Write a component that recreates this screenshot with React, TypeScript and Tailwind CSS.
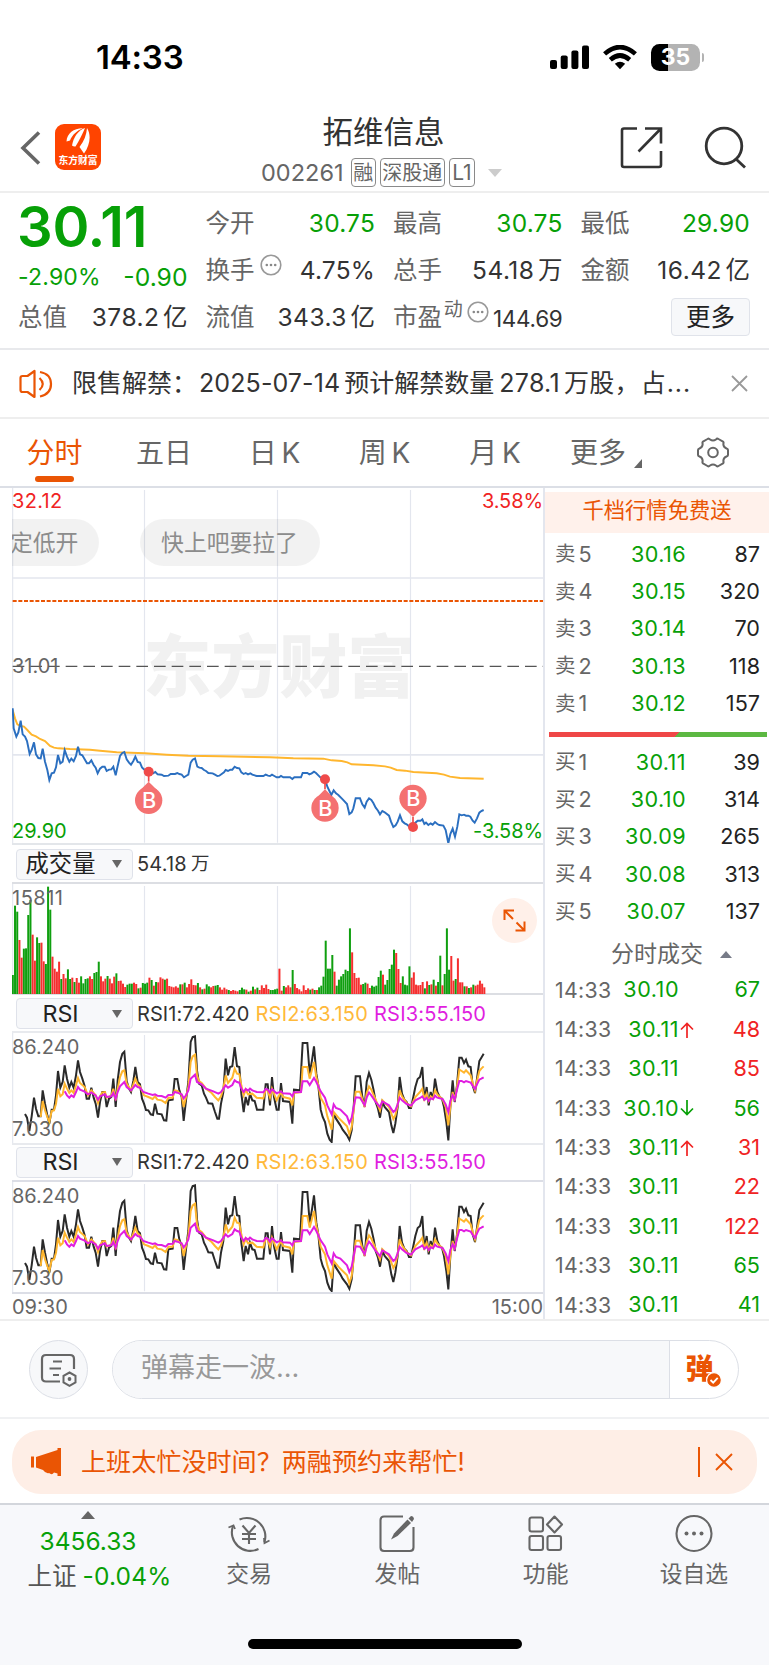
import type { ReactNode } from "react";

const PRICE_LINE =
  "38,685 41,745 49,770 55,757 62,722 68,763 75,770 81,783 89,822 95,810 102,787 108,823 115,834 122,835 128,806 135,845 142,870 148,900 155,880 162,878 168,862 174,825 181,850 188,845 194,810 201,830 208,845 214,836 221,844 228,828 234,800 240,823 247,826 254,838 261,850 267,850 274,841 281,855 287,863 293,880 300,866 307,860 314,860 320,873 327,869 334,868 340,860 347,886 353,858 360,828 367,819 373,816 380,838 387,848 393,854 400,843 406,830 413,846 420,848 426,862 433,869 446,875 459,880 466,876 473,883 485,884 492,888 505,887 512,882 525,882 532,879 538,882 545,884 552,892 558,888 565,884 572,848 578,839 585,835 592,860 598,863 605,864 612,870 618,873 625,879 638,880 645,884 652,888 658,887 665,882 672,877 677,870 684,873 691,869 697,869 704,860 711,864 718,865 724,877 731,882 737,879 744,883 751,880 757,884 770,888 790,888 797,884 804,887 810,888 816,884 823,888 830,892 837,892 843,888 850,892 870,892 877,897 883,892 903,892 908,879 922,879 928,883 935,880 942,875 948,879 955,886 962,893 975,897 982,920 994,945 1001,931 1008,940 1015,945 1028,958 1041,972 1048,1002 1055,997 1060,985 1067,955 1080,955 1087,973 1094,983 1100,965 1107,955 1114,960 1120,969 1127,983 1134,992 1140,1003 1147,993 1154,997 1167,1007 1173,1025 1180,1041 1187,1036 1193,1025 1200,1006 1207,1024 1214,1030 1220,1033 1227,1039 1239,1041 1246,1028 1253,1022 1262,1022 1267,1018 1273,1032 1278,1028 1285,1035 1292,1030 1298,1034 1305,1026 1312,1032 1318,1035 1330,1037 1337,1050 1345,1090 1351,1062 1358,1046 1365,1070 1372,1040 1378,1003 1385,1006 1392,1004 1398,1007 1405,1007 1411,1010 1418,1022 1424,1028 1431,1015 1438,998 1444,993 1451,990";

const AVG_LINE =
  "38,690 45,715 52,733 62,738 72,740 82,750 95,764 108,769 120,777 135,783 150,798 162,803 175,805 210,807 270,809 300,812 350,817 435,820 500,824 565,827 660,829 810,832 880,835 970,836 995,841 1025,843 1042,847 1055,853 1120,856 1155,859 1172,863 1190,870 1215,872 1240,876 1310,880 1332,884 1350,890 1380,894 1451,896";

const RSI1_LINE =
  "75,311 81,322 88,362 95,318 102,262 108,295 115,318 122,318 128,240 135,280 142,315 148,340 155,298 162,298 168,255 174,182 181,232 188,215 194,165 201,205 208,232 214,215 221,232 228,195 234,150 240,185 247,205 254,228 260,265 267,265 274,232 281,262 287,280 294,322 300,275 307,245 314,245 320,290 327,265 334,260 340,205 347,290 353,210 360,155 367,130 373,124 380,212 387,235 393,245 400,212 406,170 413,215 420,222 426,265 432,280 438,299 445,300 452,312 459,314 465,280 472,310 485,312 492,330 499,331 505,270 518,268 524,206 532,206 538,240 545,260 551,332 558,270 565,215 572,95 578,80 585,78 591,180 597,220 605,225 612,250 618,262 625,279 637,280 645,305 652,325 657,325 663,280 670,245 677,145 684,195 690,170 697,168 704,110 711,168 718,170 724,250 731,305 737,260 744,285 750,250 757,270 764,272 771,298 790,298 797,222 803,222 810,285 816,200 822,260 830,298 836,298 843,218 849,272 870,275 877,340 882,238 900,240 908,98 922,98 929,190 936,150 942,108 949,190 955,225 962,298 968,320 975,335 982,370 989,388 995,395 1001,308 1008,325 1021,345 1028,358 1041,375 1048,388 1055,360 1061,290 1067,198 1080,198 1087,260 1094,290 1100,215 1107,188 1114,208 1121,240 1127,275 1134,295 1140,322 1147,275 1154,290 1167,305 1174,345 1180,368 1186,340 1193,290 1199,200 1206,250 1213,268 1220,275 1227,293 1233,293 1240,260 1246,230 1253,206 1260,200 1267,170 1273,270 1280,230 1286,285 1292,245 1299,265 1305,205 1312,245 1319,260 1326,265 1332,290 1339,335 1345,390 1351,290 1358,210 1364,275 1371,225 1378,142 1385,142 1392,158 1398,148 1405,168 1412,170 1418,225 1425,248 1431,205 1438,152 1444,142 1451,130";

const RSI2_LINE =
  "122,320 128,272 135,300 142,320 148,335 155,302 162,300 168,280 174,235 181,258 188,252 194,220 201,235 208,248 214,240 221,248 228,225 234,203 240,218 254,230 264,255 274,240 287,255 294,278 300,258 307,246 315,245 320,262 334,256 340,235 347,270 353,235 360,200 367,183 373,180 380,220 393,240 400,222 406,205 413,222 420,228 432,255 445,260 458,266 465,258 472,268 485,270 497,278 505,262 518,262 524,240 532,242 545,255 551,290 558,260 565,230 572,155 578,138 585,133 591,195 597,212 605,218 618,235 635,248 645,260 655,270 663,258 670,235 677,195 684,218 697,202 704,175 711,190 718,192 724,225 731,255 737,238 744,252 757,250 770,262 790,264 797,238 803,240 810,262 816,235 830,270 843,245 849,260 870,265 877,285 882,248 903,245 908,170 922,170 929,205 942,155 949,200 955,225 962,262 975,285 982,318 995,358 1001,305 1015,322 1041,348 1048,372 1055,350 1061,300 1067,244 1080,244 1094,290 1100,248 1107,228 1114,238 1127,268 1140,300 1147,270 1167,290 1180,326 1186,315 1193,285 1199,240 1206,258 1220,278 1233,288 1246,260 1260,245 1267,235 1273,266 1280,250 1286,272 1292,258 1299,265 1305,240 1312,252 1328,268 1337,290 1345,345 1351,290 1358,245 1364,270 1371,230 1378,178 1385,182 1392,187 1398,180 1412,195 1418,218 1425,240 1431,212 1438,182 1444,175 1451,168";

const RSI3_LINE =
  "194,243 201,255 208,262 214,255 221,260 228,245 234,230 240,238 254,244 264,252 274,246 287,255 294,268 300,258 315,252 320,260 334,258 340,248 347,265 353,245 360,228 373,215 380,230 393,240 400,232 406,224 413,230 420,232 430,245 445,250 458,254 465,252 472,256 485,257 497,262 505,254 518,253 524,245 532,247 545,252 551,264 558,255 565,240 572,205 585,193 591,215 605,222 618,235 640,243 655,250 663,245 670,235 677,225 684,232 697,224 704,210 711,215 718,217 724,235 731,245 737,236 744,241 750,235 757,240 770,245 790,246 797,236 803,238 810,247 816,237 830,249 843,243 849,249 870,250 877,258 882,246 903,245 908,213 922,213 929,224 942,203 949,215 962,243 975,262 982,285 995,312 1001,282 1008,293 1021,298 1041,318 1048,338 1055,322 1061,290 1067,261 1080,262 1094,285 1100,262 1107,247 1114,255 1127,275 1140,290 1147,273 1167,285 1180,305 1186,300 1193,282 1199,262 1206,270 1220,281 1233,286 1246,270 1260,263 1267,258 1273,268 1280,262 1286,272 1292,264 1299,267 1305,256 1312,262 1328,266 1337,282 1345,305 1351,272 1358,255 1364,268 1371,238 1378,212 1385,212 1392,216 1398,212 1412,217 1418,226 1425,236 1431,222 1438,208 1444,205 1451,201";

// 每分钟成交量: G 跌 / R 涨
const VOLUME = (
  "G57 G265 G247 R162 R109 G136 G137 G237 G282 R178 R100 G170 G153 R154 R98 G90 G322 G253 R112 R76 R67 R97 G45 R60 R47 G74 G45 R49 G36 R48 R34 G53 G32 G45 G47 R53 R45 G63 G66 G97 R53 R38 R46 G54 R46 R32 R52 G62 R39 R40 R31 R21 G28 G31 G31 R34 R30 G17 R19 G33 G31 G34 R49 G42 R25 G36 R35 R50 R46 G43 R46 R24 R22 R20 R23 R19 G29 R29 G34 R20 R30 R44 R27 R26 G33 R20 G14 R16 G29 G23 R20 R24 G25 G27 R20 R13 R19 R14 G12 R9 R12 R10 R8 G12 G19 G14 R13 G7 R10 G22 R14 G19 R12 R26 R18 R28 R15 G12 G12 G14 G16 " +
  "R76 R10 G24 R20 R26 R20 G72 R30 R18 R14 R8 R26 R12 R17 G13 R16 G12 R12 G20 G25 G52 G160 G76 G76 G117 R67 G25 G43 G53 G60 G73 G69 G197 R125 R63 R48 R49 R28 G30 G34 R31 R18 G25 G22 G25 G51 G70 R58 G28 G42 G75 G88 G133 R123 R75 R33 G53 G28 G26 G83 R49 R65 R28 R26 R27 R36 G17 R38 G27 R29 G43 R25 G36 G115 R26 G60 G197 G73 R114 R40 G45 R107 R35 R35 G23 R23 G18 R20 G28 R25 R28 R40 R31 R20"
).split(" ").map((s) => ({ up: s[0] === "R", v: Number(s.slice(1)) }));

const SELLS = [["卖", "5", "30.16", "87"], ["卖", "4", "30.15", "320"], ["卖", "3", "30.14", "70"], ["卖", "2", "30.13", "118"], ["卖", "1", "30.12", "157"]];
const BUYS = [["买", "1", "30.11", "39"], ["买", "2", "30.10", "314"], ["买", "3", "30.09", "265"], ["买", "4", "30.08", "313"], ["买", "5", "30.07", "137"]];

const TRADES = [
  { price: "30.10", dir: "", qty: "67", up: false },
  { price: "30.11", dir: "up", qty: "48", up: true },
  { price: "30.11", dir: "", qty: "85", up: true },
  { price: "30.10", dir: "down", qty: "56", up: false },
  { price: "30.11", dir: "up", qty: "31", up: true },
  { price: "30.11", dir: "", qty: "22", up: true },
  { price: "30.11", dir: "", qty: "122", up: true },
  { price: "30.11", dir: "", qty: "65", up: false },
  { price: "30.11", dir: "", qty: "41", up: false },
];

function StatusBar() {
  return (
    <div className="flex h-[110px] items-start justify-between pt-[37px] pr-[65px] pl-[96px]">
      <span className="text-[33px] leading-[41px] font-semibold tracking-[-0.200px] text-black">14:33</span>
      <div className="flex items-center pt-[7px]">
        <svg width="39" height="25" viewBox="0 0 39 25">
          <rect x="0" y="15" width="7" height="9" rx="2" />
          <rect x="10.700" y="10.500" width="7" height="13.500" rx="2" />
          <rect x="21.400" y="5.500" width="7" height="18.500" rx="2" />
          <rect x="32" y="0.500" width="7" height="23.500" rx="2" />
        </svg>
        <svg className="ml-[14px]" width="34" height="25" viewBox="0 0 34 25">
          <path d="M17 24.300 L11.800 18.800 Q17 14.800 22.200 18.800 Z" />
          <path d="M7.300 14.700 Q17 6.300 26.700 14.700" fill="none" stroke="#000" strokeWidth="4.600" />
          <path d="M1.600 8.900 Q17 -4.700 32.400 8.900" fill="none" stroke="#000" strokeWidth="4.600" />
        </svg>
        <div className="ml-[14px] flex h-[27px] w-[49px] items-center justify-center overflow-hidden rounded-[8.500px] bg-[linear-gradient(90deg,#000_35%,#b3b3b3_35%)]">
          <span className="text-[23px] leading-none font-bold text-white">35</span>
        </div>
        <div className="ml-[1.500px] h-[9px] w-[2.500px] rounded-r-full bg-[#b3b3b3]" />
      </div>
    </div>
  );
}

function Tag({ children }: { children: ReactNode }) {
  return <span className="flex h-[29px] items-center rounded-[4px] border-[1.500px] border-[#8a8a8a] px-[1.500px] text-[20px] leading-none text-[#666]">{children}</span>;
}

function NavBar() {
  return (
    <div className="grid h-[83px] grid-cols-[200px_1fr_200px] border-b-2 border-[#eee]">
      <div className="flex items-start pt-[14px] pl-[20px]">
        <svg className="mt-[7px]" width="21" height="34" viewBox="0 0 21 34" fill="none" stroke="#666" strokeWidth="3.600">
          <path d="M19 1.500 L3 17 L19 32.500" />
        </svg>
        <div className="ml-[14px] flex h-[46px] w-[46px] flex-col items-center rounded-[9px] bg-[#ff4400]">
          <svg className="mt-[3px]" width="26" height="27" viewBox="0 0 26 27" fill="#fff">
            <path d="M1.500 14.500 C2 6 9 1 18 1.200 C12 3.500 7 8 5 13.500 Z" />
            <path d="M7 18.500 C8.500 10 13 3.500 20 1 C17.500 7 14.500 13 10.500 19.500 C9.500 19.800 8 19.500 7 18.500 Z" />
            <path d="M22 1 C26.500 8 25 18 19 26.500 L14.500 20 C19 14 21.500 8 22 1 Z" />
          </svg>
          <span className="mt-[1px] text-[9.800px] leading-[11px] font-bold text-white">东方财富</span>
        </div>
      </div>
      <div className="flex flex-col items-center pr-[2px]">
        <h1 className="mt-[1px] text-[30.500px] leading-[42px] text-[#333]">拓维信息</h1>
        <div className="mt-[5px] flex h-[29px] items-center pr-[2px]">
          <span className="mr-[7px] -ml-[2px] text-[23.500px] leading-none tracking-[0.050px] text-[#666]">002261</span>
          <div className="flex gap-[4px]">
            <Tag>融</Tag>
            <Tag>深股通</Tag>
            <Tag><span className="px-[1px] text-[21px]">L1</span></Tag>
          </div>
          <svg className="ml-[13px]" width="14" height="8" viewBox="0 0 14 8" fill="#ccc">
            <path d="M0 0 H14 L7 8 Z" />
          </svg>
        </div>
      </div>
      <div className="flex items-start justify-end gap-[41px] pt-[16px] pr-[22px]">
        <svg width="43" height="43" viewBox="0 0 43 43" fill="none" stroke="#333" strokeWidth="2.600">
          <path d="M17 2.500 H4 Q2 2.500 2 4.500 V39 Q2 41 4 41 H39 Q41 41 41 39 V25" />
          <path d="M25 2.500 H41 V17.500 M41 2.500 L18.500 25.500" />
        </svg>
        <svg width="43" height="43" viewBox="0 0 43 43" fill="none" stroke="#333" strokeWidth="2.800">
          <circle cx="20" cy="20" r="17.800" />
          <path d="M32 33 L41 41.500" />
        </svg>
      </div>
    </div>
  );
}

function InfoDot() {
  return (
    <svg className="relative -top-[5px] shrink-0" width="22" height="22" viewBox="0 0 22 22">
      <circle cx="11" cy="11" r="9.800" fill="none" stroke="#999" strokeWidth="1.600" />
      <circle cx="6.800" cy="11" r="1.300" fill="#888" />
      <circle cx="11" cy="11" r="1.300" fill="#888" />
      <circle cx="15.200" cy="11" r="1.300" fill="#888" />
    </svg>
  );
}

function Stat({ label, value, unit, green, info }: { label: string; value: string; unit?: string; green?: boolean; info?: boolean }) {
  return (
    <div className="-ml-px flex items-center justify-between whitespace-nowrap">
      <div className="flex items-center gap-[5px]">
        <span className="text-[24.500px] leading-none text-[#666]">{label}</span>
        {info && <InfoDot />}
      </div>
      <span className={`flex items-center gap-[3.500px] text-[24.500px] leading-none ${unit ? "tracking-[0.500px]" : "tracking-[0.200px]"} ${green ? "text-[#07a007]" : "text-[#333]"}`}>
        {value}
        {unit && <span className="tracking-normal">{unit}</span>}
      </span>
    </div>
  );
}

function Quote() {
  return (
    <div className="grid h-[157px] grid-cols-4 grid-rows-[46.500px_47px_47px] gap-x-[19px] border-b-2 border-[#e8e9ec] px-[19px] pt-[7px]">
      <div className="row-span-2 flex flex-col">
        <span className="mt-[5px] -ml-[2px] text-[56px] leading-[45px] font-semibold tracking-[-0.200px] text-[#07a007]">30.11</span>
        <div className="mt-[12px] -ml-px flex items-center justify-between leading-[30px] text-[#07a007]">
          <span className="text-[23px] tracking-[0.200px]">-2.90%</span>
          <span className="text-[24.700px]">-0.90</span>
        </div>
      </div>
      <Stat label="今开" value="30.75" green />
      <Stat label="最高" value="30.75" green />
      <Stat label="最低" value="29.90" green />
      <Stat label="换手" value="4.75%" info />
      <Stat label="总手" value="54.18" unit="万" />
      <Stat label="金额" value="16.42" unit="亿" />
      <Stat label="总值" value="378.2" unit="亿" />
      <Stat label="流值" value="343.3" unit="亿" />
      <div className="-ml-px flex items-center justify-between leading-none whitespace-nowrap">
        <span className="text-[24.500px] text-[#666]">市盈</span>
        <span className="relative -top-[8px] text-[19px] text-[#666]">动</span>
        <span className="ml-[3px]"><InfoDot /></span>
        <span className="mt-[5px] ml-[2px] text-[22.500px] tracking-[-0.300px] text-[#333]">144.69</span>
      </div>
      <div className="flex items-center justify-end">
        <button className="h-[38px] w-[79px] rounded-[4px] border-[1.500px] border-[#e0e3ea] bg-[#f7f8fa] text-[24.500px] leading-none text-[#222]">更多</button>
      </div>
    </div>
  );
}

function Notice() {
  return (
    <div className="flex h-[69px] items-center border-b-2 border-[#eee] pr-[21px] pl-[19px]">
      <svg width="34" height="30" viewBox="0 0 34 30" fill="none" stroke="#ea5504" strokeWidth="2.200" strokeLinejoin="round">
        <path d="M15.500 2 V28 L8.500 23 H3.500 Q1.500 23 1.500 21 V9 Q1.500 7 3.500 7 H8.500 Z" />
        <path d="M20.500 9 Q27 15 20.500 21" />
        <path d="M21 3 Q32 5 32 15 Q32 25 21 27.500" />
      </svg>
      <p className="ml-[19px] flex flex-1 items-center text-[25px] leading-none whitespace-nowrap text-[#333]">
        <span>限售解禁：</span>
        <span className="ml-[2px] tracking-[0.100px]">2025-07-14</span>
        <span className="ml-[4px]">预计解禁数量</span>
        <span className="ml-[5px] tracking-[0.300px]">278.1</span>
        <span className="ml-[4px] tracking-[0.300px]">万股，</span>
        <span className="ml-[1px] tracking-[0.900px]">占...</span>
      </p>
      <svg width="17" height="17" viewBox="0 0 17 17" fill="none" stroke="#999" strokeWidth="1.800">
        <path d="M1 1 L16 16 M16 1 L1 16" />
      </svg>
    </div>
  );
}

function Tabs() {
  return (
    <div className="grid h-[69px] grid-cols-[109px_111px_110px_110px_111px_109px_109px] border-b-2 border-[#dcdfe6] text-[28px] text-[#666]">
      <div className="flex flex-col items-center text-[#ea5504]">
        <span className="mt-[13px] leading-[42px]">分时</span>
        <span className="mt-[2px] h-[6px] w-[39px] rounded-full bg-[#ea5504]" />
      </div>
      {["五日", "日 K", "周 K", "月 K"].map((t) => (
        <div key={t} className="mt-[13px] pr-px text-center leading-[42px] [word-spacing:-3px]">{t}</div>
      ))}
      <div className="flex items-start pt-[13px] pl-[19px]">
        <span className="leading-[42px]">更多</span>
        <svg className="mt-[27px] ml-[8px]" width="8" height="9" viewBox="0 0 8 9" fill="#666">
          <path d="M8 0 V9 H0 Z" />
        </svg>
      </div>
      <div className="flex justify-center pt-[18px] pr-[4px]">
        <svg width="32" height="31" viewBox="0 0 32 31" fill="none" stroke="#666" strokeWidth="2" strokeLinejoin="round">
          <path d="M10.500 2 Q12 1 13 2.500 Q16 4.500 19 2.500 Q20 1 21.500 2 L26 4.600 Q27 5.500 26.300 7 Q26.500 10.500 29.500 11.500 Q31 12 31 13 V18 Q31 19 29.500 19.500 Q26.500 20.500 26.300 24 Q27 25.500 26 26.400 L21.500 29 Q20 30 19 28.500 Q16 26.500 13 28.500 Q12 30 10.500 29 L6 26.400 Q5 25.500 5.700 24 Q5.500 20.500 2.500 19.500 Q1 19 1 18 V13 Q1 12 2.500 11.500 Q5.500 10.500 5.700 7 Q5 5.500 6 4.600 Z" />
          <circle cx="16" cy="15.500" r="4.800" />
        </svg>
      </div>
    </div>
  );
}

function GridLines({ top, bottom }: { top: number; bottom: number }) {
  return (
    <g stroke="#e3e6ee" strokeWidth="3.500">
      <path d={`M433.500 ${top} V${bottom} M832.500 ${top} V${bottom} M1231.500 ${top} V${bottom}`} />
      <path d={`M38 ${top - 10} V${bottom + 10}`} />
    </g>
  );
}

function Marker({ x, y, flip }: { x: number; y: number; flip?: boolean }) {
  const cy = flip ? y - 86 : y + 86;
  const tip = flip ? y - 30 : y + 30;
  const edge = flip ? cy + 30 : cy - 30;
  return (
    <g>
      <path d={`M${x} ${y} V${tip}`} stroke="#ef4a4a" strokeWidth="5" />
      <circle cx={x} cy={y} r="15" fill="#ef4a4a" />
      <circle cx={x} cy={cy} r="41" fill="#f47171" />
      <path d={`M${x} ${tip} L${x + 26} ${edge} H${x - 26} Z`} fill="#f47171" />
      <text x={x + 1} y={cy + 23} textAnchor="middle" fontSize="65" fontWeight="500" fill="#fff">B</text>
    </g>
  );
}

function PriceChart() {
  return (
    <div className="relative h-[357px] overflow-hidden border-b-2 border-[#e3e6ea] text-[20px] leading-none">
      <svg className="block" width="532" height="356" viewBox="36 24 1596 1068">
        <text x="430" y="635" fontSize="204" fontWeight="900" fill="#f1f1f1">东方财富</text>
        <GridLines top={30} bottom={1088} />
        <path d="M36 294 H1632 M36 824.500 H1632" stroke="#e3e6ee" strokeWidth="5" />
        <path d="M38 363 H1632" stroke="#ea5504" strokeWidth="6" strokeDasharray="12 5" />
        <path d="M38 559 H1632" stroke="#555" strokeWidth="4" strokeDasharray="35 18" />
        <polyline points={AVG_LINE} fill="none" stroke="#ffb62e" strokeWidth="5.800" />
        <polyline points={PRICE_LINE} fill="none" stroke="#2b6fc0" strokeWidth="5.800" />
        <Marker x={446} y={875} />
        <Marker x={975} y={898} />
        <Marker x={1239} y={1041} flip />
      </svg>
      <span className="absolute top-[3px] left-0 tracking-[0.300px] text-[#f02323]">32.12</span>
      <span className="absolute top-[3px] right-0 tracking-[-0.100px] text-[#f02323]">3.58%</span>
      <span className="absolute top-[168px] left-0 text-[#666]">31.01</span>
      <span className="absolute top-[333px] left-0 text-[#07a007]">29.90</span>
      <span className="absolute top-[333px] right-0 tracking-[-0.100px] text-[#07a007]">-3.58%</span>
      {/* 弹幕 */}
      <span className="absolute top-[31px] -left-[30px] flex h-[47px] w-[117px] items-center rounded-full bg-black/5 pt-[2px] pl-[28px] text-[22.800px] whitespace-nowrap text-[#8c8c8c]">定低开</span>
      <span className="absolute top-[31px] left-[128px] flex h-[47px] w-[180px] items-center justify-center rounded-full bg-black/5 pt-[2px] pr-[1px] text-[22.800px] text-[#8c8c8c]">快上吧要拉了</span>
    </div>
  );
}

function IndicatorSelect({ label }: { label: string }) {
  return (
    <div className="ml-[4px] flex h-[31px] w-[117px] shrink-0 items-center rounded-[4px] border-[1.500px] border-[#dfe2ea] bg-[#f7f8fa] text-[#222]">
      <span className="flex-1 text-center text-[23.300px] leading-none">{label}</span>
      <svg className="mr-[10px] ml-[8px]" width="10" height="8" viewBox="0 0 10 8" fill="#666">
        <path d="M0 0 H10 L5 8 Z" />
      </svg>
    </div>
  );
}

function VolumeChart() {
  return (
    <div className="relative h-[111px] border-b-2 border-[#dcdee3]">
      <svg className="block" width="532" height="110" viewBox="36 132 1596 330">
        <GridLines top={138} bottom={455} />
        {VOLUME.map((b, i) => (
          <rect key={i} x={35.5 + i * 6.61} y={462 - b.v} width="6" height={b.v} fill={b.up ? "#f52f2f" : "#0f9f0f"} />
        ))}
      </svg>
      <span className="absolute top-[4px] left-0 text-[20px] leading-none tracking-[0.500px] text-[#666]">15811</span>
      <div className="absolute top-[14px] right-[6px] flex h-[45px] w-[45px] items-center justify-center rounded-full bg-[#fff0e9]">
        <svg width="23" height="23" viewBox="0 0 23 23" fill="none" stroke="#ea5504" strokeWidth="2">
          <path d="M11 1.500 H1.500 V11 M1.500 1.500 L10 10" />
          <path d="M12.500 21.500 H21.500 V12.500 M21.500 21.500 L13.500 13.500" />
        </svg>
      </div>
    </div>
  );
}

function RsiHeader() {
  return (
    <>
      <IndicatorSelect label="RSI" />
      <div className="ml-[4px] flex gap-[6px] text-[20px] leading-none tracking-[0.200px] whitespace-nowrap">
        <span className="tracking-[0.050px] text-[#333]">RSI1:72.420</span>
        <span className="text-[#ffb93a]">RSI2:63.150</span>
        <span className="text-[#e01ee0]">RSI3:55.150</span>
      </div>
    </>
  );
}

function RsiChart() {
  return (
    <div className="relative text-[20px] leading-none text-[#666]">
      <svg className="block" width="532" height="110" viewBox="36 68 1596 330">
        <GridLines top={74} bottom={396} />
        <g fill="none" strokeWidth="6">
          <polyline points={RSI1_LINE} stroke="#2a2a2a" />
          <polyline points={RSI2_LINE} stroke="#ffb62e" />
          <polyline points={RSI3_LINE} stroke="#e01ee0" />
        </g>
      </svg>
      <span className="absolute top-[4px] left-0">86.240</span>
      <span className="absolute top-[86px] left-0">7.030</span>
    </div>
  );
}

function Charts() {
  return (
    <div className="w-[545px] shrink-0 border-r-2 border-[#e3e6ee] pl-[12px]">
      <PriceChart />
      <div className="flex h-[39px] items-center border-b-2 border-[#dcdee3] pt-px">
        <IndicatorSelect label="成交量" />
        <span className="ml-[4px] flex gap-[4px] text-[20px] leading-none tracking-[0.200px] text-[#333]">54.18<span className="text-[18.500px]">万</span></span>
      </div>
      <VolumeChart />
      <div className="flex h-[38px] items-center border-b-2 border-[#e8eaee] pt-px"><RsiHeader /></div>
      <RsiChart />
      <div className="flex h-[39px] items-center border-y-2 border-t-[#e8eaee] border-b-[#dcdee6] pb-px"><RsiHeader /></div>
      <RsiChart />
      <div className="flex h-[28px] items-center justify-between border-t-2 border-[#dcdee6] text-[20px] leading-none text-[#666]">
        <span>09:30</span>
        <span>15:00</span>
      </div>
    </div>
  );
}

function DepthRow({ row }: { row: string[] }) {
  return (
    <div className="grid h-[37.300px] grid-cols-[40px_90px_1fr] items-center text-[21.600px] leading-none">
      <span className="flex items-center gap-[3px] text-[#666]"><span className="-ml-px text-[20.500px]">{row[0]}</span>{row[1]}</span>
      <span className="text-right tracking-[0.400px] text-[#07a007]">{row[2]}</span>
      <span className="text-right text-[#222]">{row[3]}</span>
    </div>
  );
}

function OrderBook() {
  return (
    <div className="flex-1 pt-[4px]">
      <div className="flex h-[41px] items-center justify-center bg-[#fff1eb] pb-[3px] text-[21.300px] leading-none text-[#ea5504]">千档行情免费送</div>
      <div className="pt-[3px] pr-[9px] pl-[11px]">
        {SELLS.map((r) => <DepthRow key={r[1]} row={r} />)}
      </div>
      <div className="mt-[9.500px] mr-[2px] ml-[4px] h-[5px] bg-[linear-gradient(135deg,#ef4747_58.500%,#5cb842_58.500%)]" />
      <div className="mt-[7px] pr-[9px] pl-[11px]">
        {BUYS.map((r) => <DepthRow key={r[1]} row={r} />)}
      </div>
      <div className="flex h-[40px] items-center justify-center pt-[8px] pl-[29px] text-[23px] leading-none text-[#666]">
        分时成交
        <svg className="ml-[17px]" width="12" height="7" viewBox="0 0 12 7" fill="#777b88">
          <path d="M0 7 H12 L6 0 Z" />
        </svg>
      </div>
      <div className="pr-[9px] pl-[11px]">
        {TRADES.map((t, i) => (
          <div key={i} className="grid h-[39.400px] grid-cols-[60px_63px_18px_1fr] items-center text-[21.600px] leading-none">
            <span className="-ml-px text-[21.300px] tracking-[0.300px] text-[#666]">14:33</span>
            <span className="text-right tracking-[0.500px] text-[#07a007]">{t.price}</span>
            <span className="pl-[1px]">
              {t.dir && (
                <svg className={t.dir === "down" ? "rotate-180" : ""} width="14" height="16" viewBox="0 0 14 16" fill="none" stroke={t.dir === "up" ? "#f02323" : "#07a007"} strokeWidth="1.700">
                  <path d="M7 16 V1.500 M1 7.500 L7 1.500 L13 7.500" />
                </svg>
              )}
            </span>
            <span className={`text-right ${t.up ? "text-[#f02323]" : "text-[#07a007]"}`}>{t.qty}</span>
          </div>
        ))}
      </div>
    </div>
  );
}

function DanmakuBar() {
  return (
    <div className="flex h-[98px] items-center border-b-2 border-[#f0f1f3] pt-[1px] pl-[29px]">
      <div className="flex h-[59px] w-[59px] items-center justify-center rounded-full border-[1.500px] border-[#dcdfe6] bg-[#f7f8fa]">
        <svg width="37" height="34" viewBox="0 0 37 34" fill="none" stroke="#666" strokeWidth="2.200">
          <path d="M20 28.500 H6 Q2 28.500 2 24.500 V6 Q2 2 6 2 H30 Q34 2 34 6 V16" />
          <path d="M13 8.500 H22 M9.500 15.500 H21 M13 22 H19" />
          <path d="M29.500 19.500 L35.500 22.800 V29.500 L29.500 32.800 L23.500 29.500 V22.800 Z" strokeWidth="2" />
          <circle cx="29.500" cy="26" r="1.900" fill="#666" stroke="none" />
        </svg>
      </div>
      <div className="ml-[24px] flex h-[59px] w-[627px] overflow-hidden rounded-full border-[1.500px] border-[#dcdfe6] bg-white">
        <div className="flex w-[556.500px] items-center border-r-[1.500px] border-[#dcdfe6] bg-[#f7f8fa] pb-[4px] pl-[28px] text-[27px] leading-none text-[#999]">弹幕走一波...</div>
        <div className="relative flex-1">
          <span className="absolute top-[14px] left-[16px] text-[28px] leading-none font-black text-[#ea5504]">弹</span>
          <svg className="absolute top-[31px] left-[36px]" width="16" height="16" viewBox="0 0 16 16">
            <circle cx="8" cy="8" r="7.400" fill="#ea5504" stroke="#fff" strokeWidth="1.200" />
            <path d="M4.500 8 L7.200 10.700 L11.700 5.800" fill="none" stroke="#fff" strokeWidth="1.800" />
          </svg>
        </div>
      </div>
    </div>
  );
}

function PromoBar() {
  return (
    <div className="h-[84px] px-[12px] pt-[11px]">
      <div className="flex h-[64px] items-center rounded-[29px] bg-[#feeee6] pr-[24px] pl-[19px] text-[#ea5504]">
        <svg width="31" height="28" viewBox="0 0 31 28" fill="#ea5504">
          <path d="M0 8.500 H3 V19.500 H0 Z" />
          <path d="M5 9 L26.500 2 V0 H30 V28 H26.500 V25.500 L23 24.500 Q21 27.500 18 25 Q15 26 12 22 L5 19.500 Z" />
        </svg>
        <span className="ml-[19px] flex-1 pt-px text-[25.100px] leading-none whitespace-nowrap">上班太忙没时间？两融预约来帮忙!</span>
        <span className="h-[30px] w-[2px] bg-[#ea5504]" />
        <svg className="ml-[15px]" width="18" height="18" viewBox="0 0 18 18" fill="none" stroke="#ea5504" strokeWidth="1.900">
          <path d="M1 1 L17 17 M17 1 L1 17" />
        </svg>
      </div>
    </div>
  );
}

function TabItem({ label, children }: { label: string; children: ReactNode }) {
  return (
    <div className="flex flex-1 flex-col items-center pt-[9px]">
      <svg width="44" height="39" viewBox="0 0 44 39" fill="none" stroke="#666" strokeWidth="2.100">{children}</svg>
      <span className="mt-[8px] text-[22.800px] leading-[26px] text-[#666]">{label}</span>
    </div>
  );
}

function BottomBar() {
  return (
    <div className="flex h-[163px] flex-col bg-[#f7f8fb]">
      <div className="flex h-[118px] border-t-2 border-[#d3d6dc]">
        <div className="flex w-[175px] flex-col items-center leading-none">
          <svg className="mt-[6px]" width="14" height="8" viewBox="0 0 14 8" fill="#666">
            <path d="M0 8 H14 L7 0 Z" />
          </svg>
          <span className="mt-[9.500px] pl-px text-[24.500px] text-[#07a007]">3456.33</span>
          <span className="mt-[10.500px] ml-[24px] flex items-center gap-[6px] text-[24.500px] tracking-[0.200px] text-[#07a007]">
            <span className="text-[24.500px] tracking-normal text-[#555]">上证</span>
            -0.04%
          </span>
        </div>
        <div className="flex flex-1 pr-px">
          <TabItem label="交易">
            <path d="M12.500 5.500 A18.500 18.500 0 0 1 37.500 28 M31.500 35 A18.500 18.500 0 0 1 6 12" />
            <path d="M1.500 13.500 L6.500 11.500 L8 15 M42.500 26.500 L37.500 29 L37 24" strokeWidth="1.800" />
            <path d="M15.500 11.500 L22 19 L28.500 11.500 M22 19 V30 M15 20 H29 M15 25 H29" />
          </TabItem>
          <TabItem label="发帖">
            <path d="M28 2.500 H9 Q5.500 2.500 5.500 6 V33.500 Q5.500 37 9 37 H35 Q38.500 37 38.500 33.500 V13" />
            <path d="M16 25.500 L19 19.500 L32.500 5.500 L36 9 L22.500 22 Z" fill="#666" stroke="none" />
            <path d="M33.500 4.500 L36 2 Q38.500 2 39 5 L37 8 Z" fill="#666" stroke="none" />
          </TabItem>
          <TabItem label="功能">
            <rect x="5.500" y="3.500" width="13.500" height="14" rx="2" />
            <rect x="5.500" y="22" width="13.500" height="14" rx="2" />
            <rect x="23.500" y="22" width="13.500" height="14" rx="2" />
            <path d="M30.500 2.500 L38 10.500 L30.500 18.500 L23 10.500 Z" strokeLinejoin="round" />
          </TabItem>
          <TabItem label="设自选">
            <circle cx="22" cy="19.500" r="17.500" />
            <g fill="#666" stroke="none">
              <circle cx="14.500" cy="19.500" r="2" />
              <circle cx="22" cy="19.500" r="2" />
              <circle cx="29.500" cy="19.500" r="2" />
            </g>
          </TabItem>
        </div>
      </div>
      <div className="mx-auto mt-[18px] h-[10px] w-[274px] rounded-full bg-black" />
    </div>
  );
}

export default function App() {
  return (
    <main className="h-[1665px] w-[769px] overflow-hidden bg-white font-['Inter','Noto_Sans_CJK_SC',sans-serif]">
      <StatusBar />
      <NavBar />
      <Quote />
      <Notice />
      <Tabs />
      <div className="flex h-[833px] overflow-hidden border-b-2 border-[#eee]">
        <Charts />
        <OrderBook />
      </div>
      <DanmakuBar />
      <PromoBar />
      <BottomBar />
    </main>
  );
}
